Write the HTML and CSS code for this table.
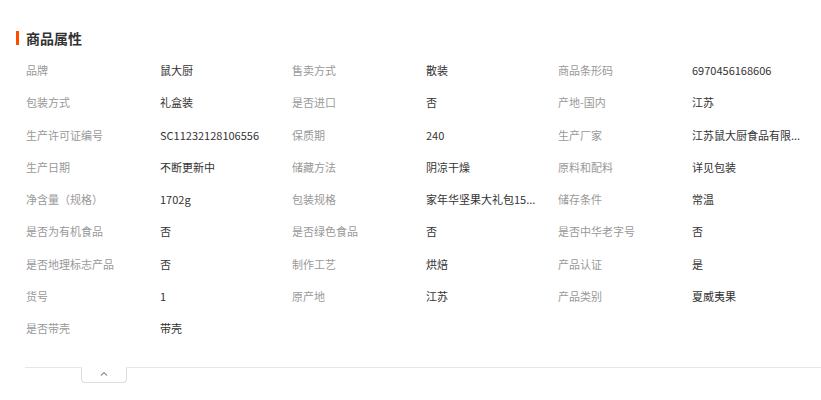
FILE: index.html
```
<!DOCTYPE html>
<html lang="zh-CN">
<head>
    <meta charset="UTF-8">
    <title>商品属性</title>
    <link rel="stylesheet" href="styles.css">
</head>
<body>
    <div class="attrs">
        <h2 class="attrs-title">商品属性</h2>
        <div class="attrs-grid">
            <span class="k">品牌</span><span class="v">鼠大厨</span>
            <span class="k">售卖方式</span><span class="v">散装</span>
            <span class="k">商品条形码</span><span class="v">6970456168606</span>

            <span class="k">包装方式</span><span class="v">礼盒装</span>
            <span class="k">是否进口</span><span class="v">否</span>
            <span class="k">产地-国内</span><span class="v">江苏</span>

            <span class="k">生产许可证编号</span><span class="v">SC11232128106556</span>
            <span class="k">保质期</span><span class="v">240</span>
            <span class="k">生产厂家</span><span class="v" title="江苏鼠大厨食品有限公司">江苏鼠大厨食品有限...</span>

            <span class="k">生产日期</span><span class="v">不断更新中</span>
            <span class="k">储藏方法</span><span class="v">阴凉干燥</span>
            <span class="k">原料和配料</span><span class="v">详见包装</span>

            <span class="k">净含量（规格）</span><span class="v">1702g</span>
            <span class="k">包装规格</span><span class="v" title="家年华坚果大礼包1502g">家年华坚果大礼包15...</span>
            <span class="k">储存条件</span><span class="v">常温</span>

            <span class="k">是否为有机食品</span><span class="v">否</span>
            <span class="k">是否绿色食品</span><span class="v">否</span>
            <span class="k">是否中华老字号</span><span class="v">否</span>

            <span class="k">是否地理标志产品</span><span class="v">否</span>
            <span class="k">制作工艺</span><span class="v">烘焙</span>
            <span class="k">产品认证</span><span class="v">是</span>

            <span class="k">货号</span><span class="v">1</span>
            <span class="k">原产地</span><span class="v">江苏</span>
            <span class="k">产品类别</span><span class="v">夏威夷果</span>

            <span class="k">是否带壳</span><span class="v">带壳</span>
        </div>
        <div class="attrs-foot">
            <button class="fold" type="button" aria-label="收起">
                <svg width="8" height="5" viewBox="0 0 8 5"><path d="M1 4.5 L4 1.5 L7 4.5" fill="none" stroke="#8a94a6" stroke-width="1.1"/></svg>
            </button>
        </div>
    </div>
</body>
</html>
```
FILE: styles.css
```
* {
    margin: 0;
    padding: 0;
    box-sizing: border-box;
}

body {
    background: #fff;
    font-family: "Noto Sans CJK SC", "Noto Sans", sans-serif;
    color: #333;
}

.attrs {
    padding: 31px 0 0 16px;
}

.attrs-title {
    font-size: 14px;
    font-weight: bold;
    line-height: 16px;
    color: #333;
    border-left: 3px solid #ff4a00;
    padding-left: 7px;
    height: 14px;
    display: flex;
    align-items: center;
}

.attrs-grid {
    display: grid;
    grid-template-columns: repeat(3, 134px 132px);
    grid-auto-rows: 32.25px;
    margin: 9px 0 0 10px;
    font-size: 11px;
    align-items: center;
}

.k {
    color: #999;
}

.v {
    color: #333;
    white-space: nowrap;
}

.attrs-foot {
    margin: 23px 0 0 9px;
    border-top: 1px solid #e6e6e6;
    height: 20px;
    position: relative;
}

.fold {
    position: absolute;
    left: 56px;
    top: -1px;
    width: 46px;
    height: 16px;
    background: #fff;
    border: 1px solid #dcdcdc;
    border-top: 1px solid #fff;
    border-radius: 0 0 4px 4px;
    display: flex;
    justify-content: center;
    padding-top: 3px;
    cursor: pointer;
}
```
